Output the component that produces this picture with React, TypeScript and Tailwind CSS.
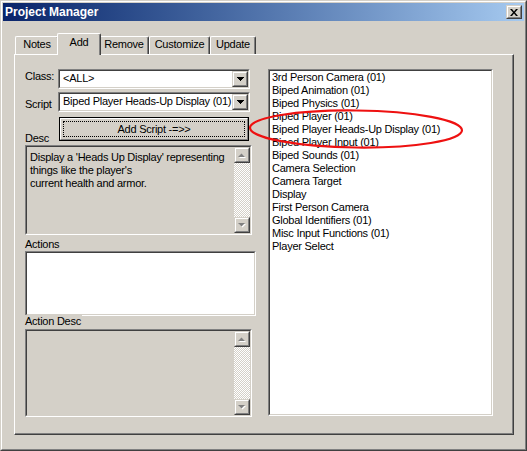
const sunkenOuter = 'border border-t-[#808080] border-l-[#808080] border-r-white border-b-white';
const sunkenInner = 'border border-t-[#404040] border-l-[#404040] border-r-[#d4d0c8] border-b-[#d4d0c8]';
const raisedOuter = 'border border-t-[#d4d0c8] border-l-[#d4d0c8] border-r-[#404040] border-b-[#404040]';
const raisedInner = 'border border-t-white border-l-white border-r-[#808080] border-b-[#808080]';

const scripts = [
  '3rd Person Camera (01)',
  'Biped Animation (01)',
  'Biped Physics (01)',
  'Biped Player (01)',
  'Biped Player Heads-Up Display (01)',
  'Biped Player Input (01)',
  'Biped Sounds (01)',
  'Camera Selection',
  'Camera Target',
  'Display',
  'First Person Camera',
  'Global Identifiers (01)',
  'Misc Input Functions (01)',
  'Player Select',
];

const tabs = [
  { label: 'Notes', cls: 'w-[44px]' },
  { label: 'Add', cls: 'w-[44px]', selected: true },
  { label: 'Remove', cls: 'w-[50px]' },
  { label: 'Customize', cls: 'w-[61px]' },
  { label: 'Update', cls: 'w-[46px]' },
];

function Raised({ className = '', children }: { className?: string; children?: React.ReactNode }) {
  return (
    <div className={`${raisedOuter} ${className}`}>
      <div className={`${raisedInner} flex h-full items-center justify-center bg-[#d4d0c8]`}>{children}</div>
    </div>
  );
}

function ComboArrow() {
  return (
    <svg width="7" height="4" viewBox="0 0 7 4" shapeRendering="crispEdges">
      <polygon points="0,0 7,0 3.5,4" fill="#000" />
    </svg>
  );
}

function ScrollArrow({ up }: { up?: boolean }) {
  return (
    <svg width="8" height="5" viewBox="0 0 8 5">
      {up ? (
        <>
          <polygon points="1,5 8,5 4.5,1.5" fill="#fff" />
          <polygon points="0,4 7,4 3.5,0.5" fill="#808080" />
        </>
      ) : (
        <>
          <polygon points="1,1 8,1 4.5,4.5" fill="#fff" />
          <polygon points="0,0 7,0 3.5,3.5" fill="#808080" />
        </>
      )}
    </svg>
  );
}

function VScroll() {
  return (
    <div className="flex h-full w-[16px] flex-col">
      <Raised className="h-[16px]">
        <ScrollArrow up />
      </Raised>
      <div className="flex-1 bg-[conic-gradient(#fff_25%,#d4d0c8_0_50%,#fff_0_75%,#d4d0c8_0)] bg-[length:2px_2px]" />
      <Raised className="h-[16px]">
        <ScrollArrow />
      </Raised>
    </div>
  );
}

function Combo({ value }: { value: string }) {
  return (
    <div className={`${sunkenOuter} h-[20px] w-[192px]`}>
      <div className={`${sunkenInner} flex h-full bg-white`}>
        <div className="flex-1 overflow-hidden whitespace-nowrap pl-[3px] pt-[1px] leading-[13px]">{value}</div>
        <Raised className="h-full w-[16px]">
          <ComboArrow />
        </Raised>
      </div>
    </div>
  );
}

function TextBox({ className, children }: { className: string; children?: React.ReactNode }) {
  return (
    <div className={`${sunkenOuter} ${className}`}>
      <div className={`${sunkenInner} flex h-full bg-[#d4d0c8]`}>
        <div className="flex-1 pl-[3px] pt-[4px] leading-[13px]">{children}</div>
        <VScroll />
      </div>
    </div>
  );
}

export default function App() {
  return (
    <div className="relative h-[451px] w-[527px] overflow-hidden bg-[#d4d0c8] font-['Liberation_Sans',Arial,sans-serif] text-[11px] tracking-[-0.25px] text-black">
      <div className={`${raisedOuter} h-full`}>
        <div className={`${raisedInner} h-full p-[1px]`}>
          {/* title bar */}
          <div className="flex h-[18px] items-center justify-between bg-gradient-to-r from-[#0a246a] to-[#a6caf0] pl-[2px] pr-[2px]">
            <span className="text-[12px] font-bold tracking-normal text-white">Project Manager</span>
            <Raised className="h-[14px] w-[16px]">
              <svg width="8" height="7" viewBox="0 0 8 7">
                <path d="M0 0h2l2 2.5L6 0h2L5 3.5 8 7H6L4 4.5 2 7H0l3-3.5z" fill="#000" />
              </svg>
            </Raised>
          </div>

          {/* tabs */}
          <div className="mt-[12px] ml-[12px] flex h-[21px] items-end">
            {tabs.map((t) =>
              t.selected ? (
                <div
                  key={t.label}
                  className={`${t.cls} relative z-10 -mx-[2px] -mb-[1px] flex h-[22px] justify-center rounded-t-[2px] border-t border-r border-l border-t-white border-r-[#404040] border-l-white bg-[#d4d0c8] pt-[2px] leading-[13px] shadow-[inset_-1px_0_0_#808080]`}
                >
                  {t.label}
                </div>
              ) : (
                <div
                  key={t.label}
                  className={`${t.cls} flex h-[18px] justify-center rounded-t-[2px] border-t border-r border-l border-t-white border-r-[#404040] border-l-white pt-[1px] leading-[13px] shadow-[inset_-1px_0_0_#808080]`}
                >
                  {t.label}
                </div>
              )
            )}
          </div>

          {/* tab panel */}
          <div className="ml-[11px] flex h-[381px] w-[500px] border-t border-r border-b border-l border-t-white border-r-[#404040] border-b-[#404040] border-l-white pt-[14px] pl-[10px] shadow-[inset_-1px_-1px_0_#808080]">
            <div className="flex w-[231px] flex-col">
              <div className="flex">
                <div className="w-[33px] pt-[1px] leading-[13px]">Class:</div>
                <Combo value="<ALL>" />
              </div>
              <div className="mt-[3px] flex">
                <div className="w-[33px] pt-[6px] leading-[13px]">Script</div>
                <Combo value="Biped Player Heads-Up Display (01)" />
              </div>
              <div className="mt-[5px] ml-[34px] h-[24px] w-[190px] border border-black">
                <div className="h-full border border-t-white border-l-white border-r-[#808080] border-b-[#808080] p-[2px]">
                  <div className="flex h-full items-center justify-center border border-dotted border-black leading-[13px]">
                    Add Script -=&gt;&gt;
                  </div>
                </div>
              </div>
              <div className="-mt-[9px] h-[13px] leading-[13px]">Desc</div>
              <TextBox className="h-[90px] w-[227px]">
                Display a 'Heads Up Display' representing
                <br />
                things like the player's
                <br />
                current health and armor.
              </TextBox>
              <div className="mt-[3px] h-[13px] leading-[13px]">Actions</div>
              <div className={`${sunkenOuter} h-[65px] w-[231px]`}>
                <div className={`${sunkenInner} h-full bg-white`} />
              </div>
              <div className="-mt-[1px] h-[13px] w-fit bg-[#d4d0c8] pr-[1px] leading-[13px]">Action Desc</div>
              <TextBox className="mt-[1px] h-[88px] w-[227px]" />
            </div>

            <div className={`${sunkenOuter} ml-[12px] h-[347px] w-[225px]`}>
              <div className={`${sunkenInner} h-full bg-white pl-[2px]`}>
                {scripts.map((s) => (
                  <div key={s} className="h-[13px] whitespace-nowrap leading-[13px]">
                    {s}
                  </div>
                ))}
              </div>
            </div>
          </div>
        </div>
      </div>

      {/* red annotation */}
      <svg className="pointer-events-none absolute inset-0" width="527" height="451">
        <ellipse cx="356" cy="129" rx="106" ry="18.5" transform="rotate(0.7 356 129)" fill="none" stroke="#ee1111" strokeWidth="2.2" />
      </svg>
    </div>
  );
}
